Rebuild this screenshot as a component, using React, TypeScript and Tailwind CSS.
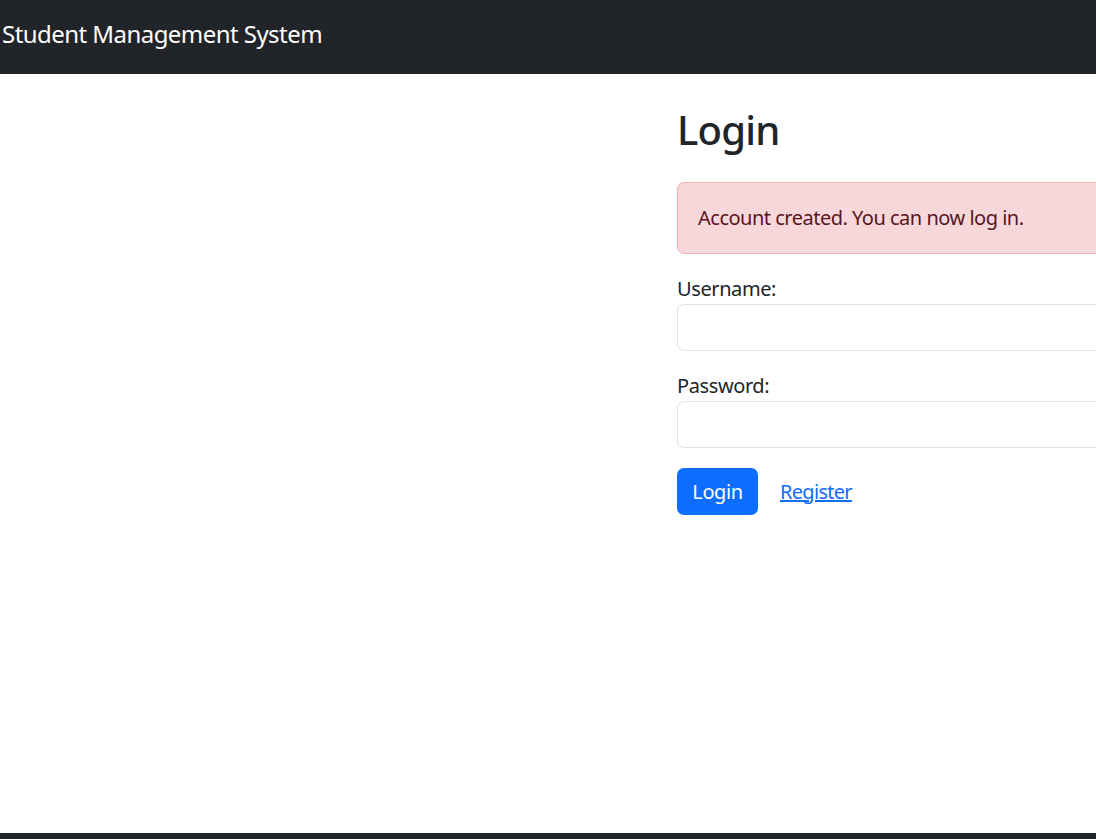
import React from 'react';

const FONT = "font-['Segoe_UI','Noto_Sans','Liberation_Sans',sans-serif]";

export default function App() {
  return (
    <div className={`flex h-[839px] w-full flex-col overflow-hidden bg-white text-[#212529] ${FONT}`}>
      {/* Navbar */}
      <nav className="flex h-[74px] shrink-0 items-center bg-[#212529] pb-[6px] pl-[2px]">
        <span className="text-[24px] leading-[36px] tracking-[-0.55px] text-white">Student Management System</span>
      </nav>

      {/* Content */}
      <main className="flex-1 pl-[677px] pt-[32px]">
        <div className="w-[560px]">
          <h2 className="mb-[28px] text-[40px] font-medium leading-[48px] tracking-[-0.8px]">Login</h2>

          <div className="mb-[20px] rounded-[7px] border border-[#f1aeb5] bg-[#f8d7da] p-[20px] text-[20px] leading-[30px] tracking-[-0.5px] text-[#58151c]">
            Account created. You can now log in.
          </div>

          <form className="flex flex-col tracking-[-0.4px]">
            <div className="mb-[20px]">
              <label className="block text-[20px] leading-[30px]">Username:</label>
              <input
                type="text"
                className="block h-[47px] w-full rounded-[7px] border border-[#dee2e6] bg-white px-[15px] text-[20px] outline-none"
              />
            </div>
            <div className="mb-[20px]">
              <label className="block text-[20px] leading-[30px]">Password:</label>
              <input
                type="password"
                className="block h-[47px] w-full rounded-[7px] border border-[#dee2e6] bg-white px-[15px] text-[20px] outline-none"
              />
            </div>
            <div className="flex items-center gap-[22px]">
              <button
                type="button"
                className="h-[47px] w-[81px] rounded-[7px] bg-[#0d6efd] text-[20px] leading-[30px] text-white"
              >
                Login
              </button>
              <a href="#" className="text-[20px] leading-[30px] tracking-[-0.7px] text-[#0d6efd] underline">
                Register
              </a>
            </div>
          </form>
        </div>
      </main>

      {/* Footer */}
      <footer className="h-[6px] shrink-0 bg-[#212529]" />
    </div>
  );
}
